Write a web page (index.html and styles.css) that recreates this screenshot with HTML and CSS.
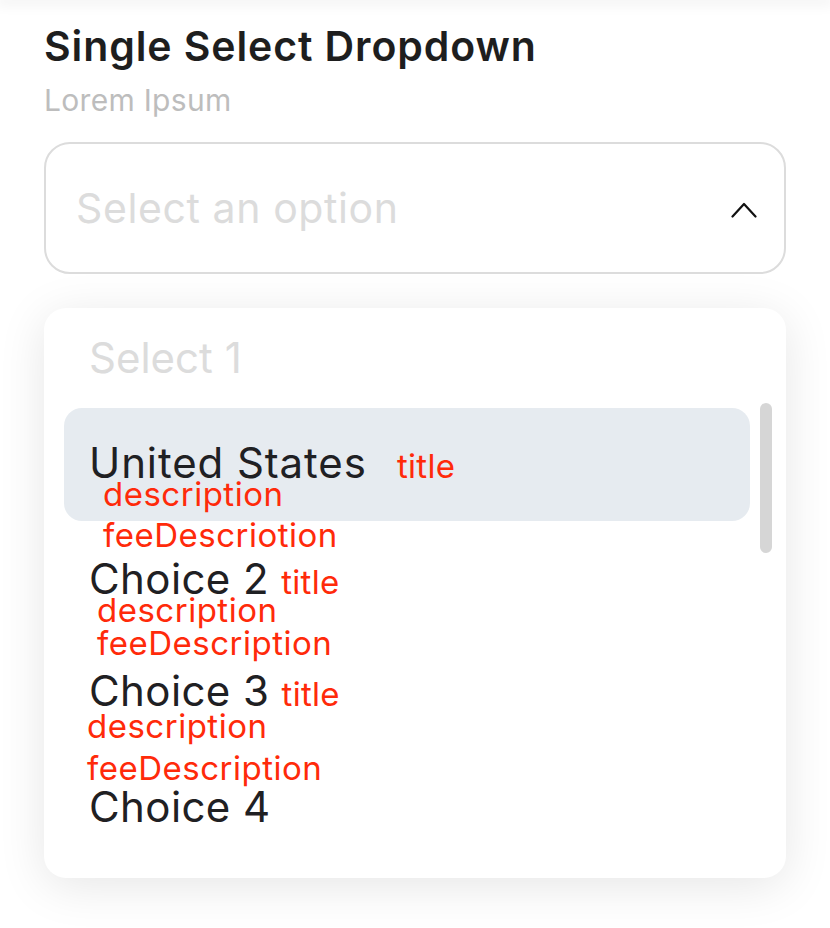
FILE: index.html
```html
<!DOCTYPE html>
<html lang="en">
<head>
<meta charset="utf-8">
<title>Single Select Dropdown</title>
<link rel="stylesheet" href="styles.css">
</head>
<body>
<div class="topbar"></div>
<main class="page">
  <h1 class="title">Single Select Dropdown</h1>
  <p class="subtitle">Lorem Ipsum</p>
  <div class="select">
    <span class="placeholder">Select an option</span>
    <svg class="chevron" width="26" height="16" viewBox="0 0 26 16" aria-hidden="true">
      <path d="M1.5 14.5 L13 2 L24.5 14.5" fill="none" stroke="#111" stroke-width="2.2" stroke-linecap="round" stroke-linejoin="round"/>
    </svg>
  </div>
  <div class="panel">
    <div class="scrollbar"></div>
    <div class="panel-label">Select 1</div>
    <ul class="options">
      <li class="option option-active">
        <div class="opt-line"><span class="opt-name">United States</span> <span class="opt-title opt-title-wide">title</span></div>
        <div class="opt-desc indent-a desc-a">description</div>
        <div class="opt-desc indent-a fee-a">feeDescriotion</div>
      </li>
      <li class="option option-b">
        <div class="opt-line"><span class="opt-name">Choice 2</span> <span class="opt-title">title</span></div>
        <div class="opt-desc indent-b desc-b">description</div>
        <div class="opt-desc indent-b fee-b">feeDescription</div>
      </li>
      <li class="option option-c">
        <div class="opt-line"><span class="opt-name">Choice 3</span> <span class="opt-title">title</span></div>
        <div class="opt-desc indent-c desc-c">description</div>
        <div class="opt-desc indent-c fee-c">feeDescription</div>
      </li>
      <li class="option option-d">
        <div class="opt-line"><span class="opt-name">Choice 4</span></div>
      </li>
    </ul>
  </div>
</main>
</body>
</html>
```

FILE: styles.css
```css
* { box-sizing: border-box; }

html, body {
  margin: 0;
  padding: 0;
  background: #ffffff;
}

body {
  font-family: "Inter", "Noto Sans", "Liberation Sans", sans-serif;
  color: #1f2023;
}

.topbar {
  height: 0;
  box-shadow: 0 0 14px 4px rgba(0, 0, 0, 0.07);
}

.page {
  padding: 24px 44px 50px 44px;
}

.title {
  margin: 0;
  font-size: 41px;
  line-height: 44px;
  font-weight: 600;
  color: #1e1e1e;
  letter-spacing: 0.9px;
}

.subtitle {
  margin: 14px 0 0 0;
  font-size: 30px;
  line-height: 36px;
  font-weight: 400;
  color: #bdbdbd;
  letter-spacing: 0.3px;
}

.select {
  margin-top: 24px;
  height: 132px;
  border: 2px solid #dcdcdc;
  border-radius: 26px;
  display: flex;
  align-items: center;
  justify-content: space-between;
  padding: 0 27px 0 30px;
  background: #fff;
}

.placeholder {
  font-size: 41px;
  line-height: 48px;
  color: #dcdcdc;
  letter-spacing: 0.6px;
}

.chevron {
  display: block;
  margin-top: 4px;
}

.panel {
  position: relative;
  margin-top: 34px;
  height: 570px;
  background: #fff;
  border-radius: 22px;
  box-shadow: 0 8px 48px rgba(0, 0, 0, 0.1);
  padding: 30px 36px 50px 20px;
}

.scrollbar {
  position: absolute;
  left: 716px;
  top: 95px;
  width: 12px;
  height: 150px;
  border-radius: 6px;
  background: #d6d6d6;
}

.panel-label {
  padding-left: 25px;
  font-size: 42px;
  line-height: 40px;
  color: #dcdcdc;
}

.options {
  list-style: none;
  margin: 30px 0 0 0;
  padding: 0;
}

.option {
  position: relative;
  padding-left: 25px;
}

.option-active {
  padding-top: 35px;
  isolation: isolate;
}

.option-active::before {
  content: "";
  position: absolute;
  left: 0;
  top: 0;
  width: 100%;
  height: 113px;
  border-radius: 18px;
  background: #e6ebf0;
  z-index: -1;
}

.opt-line {
  font-size: 42px;
  line-height: 40px;
  letter-spacing: 0.4px;
  white-space: nowrap;
}

.opt-name {
  color: #1f2023;
}

.option-active .opt-name {
  letter-spacing: 0.9px;
}

.opt-title {
  font-size: 33px;
  line-height: 1;
  letter-spacing: 0.3px;
  color: #ff2a0a;
}

.opt-title-wide {
  margin-left: 18px;
}

.opt-desc {
  font-size: 33px;
  line-height: 31px;
  letter-spacing: 0.5px;
  color: #ff2a0a;
  white-space: nowrap;
}

.indent-a { margin-left: 14px; }
.indent-b { margin-left: 8px; }
.indent-c { margin-left: -2px; }

.desc-a { margin-top: -4px; }
.fee-a { margin-top: 10px; }

.option-b { margin-top: 8px; }
.desc-b { margin-top: -4px; }
.fee-b { margin-top: 2px; }

.option-c { margin-top: 12px; }
.desc-c { margin-top: 0; }
.fee-c { margin-top: 11px; }

.option-d { margin-top: 3px; }
```
